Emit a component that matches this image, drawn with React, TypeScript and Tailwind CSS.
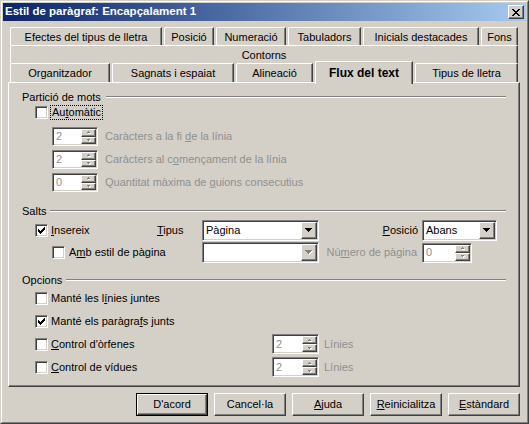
import React from "react";

const raised =
  "border border-t-white border-l-white border-r-[#404040] border-b-[#404040] shadow-[inset_-1px_-1px_#808080]";
const sunken =
  "border border-t-[#808080] border-l-[#808080] border-r-white border-b-white shadow-[inset_1px_1px_#404040,inset_-1px_-1px_#D4D0C8]";

function Check({ checked }: { checked?: boolean }) {
  return (
    <div className={`w-[13px] h-[13px] shrink-0 bg-white flex items-center justify-center ${sunken}`}>
      {checked && (
        <svg width="7" height="7" viewBox="0 0 7 7" shapeRendering="crispEdges">
          {[2, 3, 4, 3, 2, 1, 0].map((y, i) => (
            <rect key={i} x={i} y={y} width="1" height="3" fill="#000" />
          ))}
        </svg>
      )}
    </div>
  );
}

function SpinArrow({ up }: { up?: boolean }) {
  const px = up
    ? [
        [1, 0],
        [0, 1],
        [1, 1],
        [2, 1],
      ]
    : [
        [0, 0],
        [1, 0],
        [2, 0],
        [1, 1],
      ];
  return (
    <svg width="4" height="3" viewBox="0 0 4 3" shapeRendering="crispEdges">
      {px.map(([x, y], i) => (
        <rect key={"w" + i} x={x + 1} y={y + 1} width="1" height="1" fill="#fff" />
      ))}
      {px.map(([x, y], i) => (
        <rect key={"g" + i} x={x} y={y} width="1" height="1" fill="#808080" />
      ))}
    </svg>
  );
}

function Spinner({ w, h, value }: { w: string; h: string; value: string }) {
  return (
    <div className={`${w} ${h} shrink-0 bg-white flex ${sunken} p-[1px]`}>
      <div className="flex-1 flex items-center pl-[2px] text-[#8f8f8f] leading-none">{value}</div>
      <div className="w-[15px] flex flex-col">
        <div className={`flex-1 bg-[#D4D0C8] flex items-center justify-center ${raised}`}>
          <SpinArrow up />
        </div>
        <div className={`flex-1 bg-[#D4D0C8] flex items-center justify-center ${raised}`}>
          <SpinArrow />
        </div>
      </div>
    </div>
  );
}

function ComboArrow({ disabled }: { disabled?: boolean }) {
  const rows = [
    [0, 7],
    [1, 5],
    [2, 3],
    [3, 1],
  ];
  return (
    <svg width="8" height="5" viewBox="0 0 8 5" shapeRendering="crispEdges">
      {disabled &&
        rows.map(([x, w], i) => <rect key={"s" + i} x={x + 1} y={i + 1} width={w} height="1" fill="#fff" />)}
      {rows.map(([x, w], i) => (
        <rect key={i} x={x} y={i} width={w} height="1" fill={disabled ? "#808080" : "#000"} />
      ))}
    </svg>
  );
}

function Combo({ w, value, disabled }: { w: string; value?: string; disabled?: boolean }) {
  return (
    <div className={`${w} h-[21px] shrink-0 bg-white flex ${sunken} p-[1px]`}>
      <div className="flex-1 flex items-center pl-[2px] text-black leading-none">{value}</div>
      <div className={`w-[16px] bg-[#D4D0C8] flex items-center justify-center ${raised}`}>
        <ComboArrow disabled={disabled} />
      </div>
    </div>
  );
}

function Tab({ w, children, h = "h-full" }: { w: string; children: React.ReactNode; h?: string }) {
  return (
    <div
      className={`${w} ${h} shrink-0 bg-[#D4D0C8] border-t border-l border-t-white border-l-white border-r border-r-[#404040] shadow-[inset_-1px_0_#808080] rounded-tl-[2px] flex justify-center pt-[3px] leading-[13px]`}
    >
      {children}
    </div>
  );
}

function Header({ children, gap = "ml-[5px]" }: { children: React.ReactNode; gap?: string }) {
  return (
    <div className="h-[14px] flex items-center leading-none">
      <span>{children}</span>
      <div className={`flex-1 h-[2px] border-t border-t-[#808080] border-b border-b-white ${gap}`} />
    </div>
  );
}

function Button({ children, def }: { children: React.ReactNode; def?: boolean }) {
  if (def) {
    return (
      <div className="w-[72px] h-[23px] border border-black">
        <div className={`w-full h-full flex items-center justify-center ${raised}`}>{children}</div>
      </div>
    );
  }
  return <div className={`w-[72px] h-[23px] flex items-center justify-center ${raised}`}>{children}</div>;
}

function CloseX() {
  const px: [number, number][] = [];
  for (let r = 0; r < 7; r++) {
    px.push([r, r], [r + 1, r], [6 - r, r], [7 - r, r]);
  }
  return (
    <svg width="8" height="7" viewBox="0 0 8 7" shapeRendering="crispEdges">
      {px.map(([x, y], i) => (
        <rect key={i} x={x} y={y} width="1" height="1" fill="#000" />
      ))}
    </svg>
  );
}

export default function App() {
  const gray = "text-[#8f8f8f]";
  return (
    <div className="w-[529px] h-[424px] bg-[#D4D0C8] border border-t-[#D4D0C8] border-l-[#D4D0C8] border-r-[#404040] border-b-[#404040] font-['Liberation_Sans',Arial,sans-serif] text-[11px] text-black">
      <div className="h-full border border-t-white border-l-white border-r-[#808080] border-b-[#808080] p-[1px] flex flex-col">
        {/* Title bar */}
        <div className="h-[18px] shrink-0 flex items-center pl-[2px] pr-[2px] bg-[linear-gradient(to_right,#0A246A,#A6CAF0)]">
          <span className="flex-1 text-white font-bold text-[11.5px] leading-none">
            Estil de paràgraf: Encapçalament 1
          </span>
          <div className={`w-[16px] h-[14px] bg-[#D4D0C8] flex items-center justify-center ${raised}`}>
            <CloseX />
          </div>
        </div>

        {/* Body */}
        <div className="flex-1 flex flex-col pt-[6px] pl-[5px] pr-[6px]">
          <div className="ml-[2px] w-[508px] flex flex-col">
            <div className="h-[18px] flex gap-[2px]">
              <Tab w="w-[152px]">Efectes del tipus de lletra</Tab>
              <Tab w="w-[50px]">Posició</Tab>
              <Tab w="w-[70px]">Numeració</Tab>
              <Tab w="w-[73px]">Tabuladors</Tab>
              <Tab w="w-[116px]">Inicials destacades</Tab>
              <Tab w="w-[37px]">Fons</Tab>
            </div>
            <div className="h-[18px] flex">
              <Tab w="w-[508px]">Contorns</Tab>
            </div>
            <div className="h-[19px] flex gap-[2px] items-end relative z-10">
              <Tab w="w-[100px]">Organitzador</Tab>
              <Tab w="w-[122px]">Sagnats i espaiat</Tab>
              <Tab w="w-[77px]">Alineació</Tab>
              <div className="w-[98px] h-[23px] mb-[-2px] shrink-0 bg-[#D4D0C8] border-t border-l border-t-white border-l-white border-r border-r-[#404040] shadow-[inset_-1px_0_#808080] rounded-tl-[2px] flex justify-center pt-[4px] leading-[14px] font-bold text-[12px]">
                Flux del text
              </div>
              <Tab w="w-[103px]">Tipus de lletra</Tab>
            </div>
          </div>

          {/* Panel */}
          <div className={`w-[512px] h-[305px] shrink-0 flex flex-col px-[13px] pt-[7px] ${raised}`}>
            <Header>Partició de mots</Header>
            <div className="mt-[1px] h-[15px] flex items-center pl-[13px]">
              <Check />
              <span className="ml-[2px] h-[15px] border border-dotted border-black px-[1px] flex items-center leading-none">
                Au<u>t</u>omàtic
              </span>
            </div>
            <div className="mt-[7px] flex flex-col gap-[4px]">
              <div className="h-[19px] flex items-center pl-[30px]">
                <Spinner w="w-[46px]" h="h-[19px]" value="2" />
                <span className={`ml-[7px] ${gray}`}>
                  Caràcters a la fi <u>d</u>e la línia
                </span>
              </div>
              <div className="h-[19px] flex items-center pl-[30px]">
                <Spinner w="w-[46px]" h="h-[19px]" value="2" />
                <span className={`ml-[7px] ${gray}`}>
                  Caràcters al c<u>o</u>mençament de la línia
                </span>
              </div>
              <div className="h-[19px] flex items-center pl-[30px]">
                <Spinner w="w-[46px]" h="h-[19px]" value="0" />
                <span className={`ml-[7px] ${gray}`}>
                  Quantitat màxima de <u>g</u>uions consecutius
                </span>
              </div>
            </div>

            <div className="mt-[12px]">
              <Header gap="ml-[4px]">Salts</Header>
            </div>
            <div className="mt-[2px] h-[21px] flex items-center pl-[13px]">
              <div className="w-[122px] flex items-center">
                <Check checked />
                <span className="ml-[3px]">
                  <u>I</u>nsereix
                </span>
              </div>
              <div className="w-[45px]">
                <u>T</u>ipus
              </div>
              <Combo w="w-[117px]" value="Pàgina" />
              <div className="w-[103px] text-right pr-[4px]">
                <u>P</u>osició
              </div>
              <Combo w="w-[75px]" value="Abans" />
            </div>
            <div className="mt-[1px] h-[21px] flex items-center pl-[30px]">
              <div className="w-[150px] flex items-center">
                <Check />
                <span className="ml-[4px]">
                  A<u>m</u>b estil de pàgina
                </span>
              </div>
              <Combo w="w-[117px]" disabled />
              <div className={`w-[103px] text-right pr-[5px] ${gray}`}>
                Nú<u>m</u>ero de pàgina
              </div>
              <Spinner w="w-[50px]" h="h-[20px]" value="0" />
            </div>

            <div className="mt-[10px]">
              <Header gap="ml-[4px]">Opcions</Header>
            </div>
            <div className="mt-[1px] flex flex-col gap-[3px]">
              <div className="h-[20px] flex items-center pl-[13px]">
                <Check />
                <span className="ml-[3px]">
                  Manté les l<u>í</u>nies juntes
                </span>
              </div>
              <div className="h-[20px] flex items-center pl-[13px]">
                <Check checked />
                <span className="ml-[3px]">
                  Manté els paràgra<u>f</u>s junts
                </span>
              </div>
              <div className="h-[20px] flex items-center pl-[13px]">
                <div className="w-[237px] flex items-center">
                  <Check />
                  <span className="ml-[3px]">
                    <u>C</u>ontrol d'òrfenes
                  </span>
                </div>
                <Spinner w="w-[47px]" h="h-[20px]" value="2" />
                <span className={`ml-[5px] ${gray}`}>Línies</span>
              </div>
              <div className="h-[20px] flex items-center pl-[13px]">
                <div className="w-[237px] flex items-center">
                  <Check />
                  <span className="ml-[3px]">
                    <u>C</u>ontrol de vídues
                  </span>
                </div>
                <Spinner w="w-[47px]" h="h-[20px]" value="2" />
                <span className={`ml-[5px] ${gray}`}>Línies</span>
              </div>
            </div>
          </div>

          {/* Buttons */}
          <div className="mt-[6px] flex justify-end gap-[6px]">
            <Button def>D'acord</Button>
            <Button>Cancel·la</Button>
            <Button>
              <span>
                <u>A</u>juda
              </span>
            </Button>
            <Button>
              <span>
                <u>R</u>einicialitza
              </span>
            </Button>
            <Button>
              <span>
                <u>E</u>stàndard
              </span>
            </Button>
          </div>
        </div>
      </div>
    </div>
  );
}
